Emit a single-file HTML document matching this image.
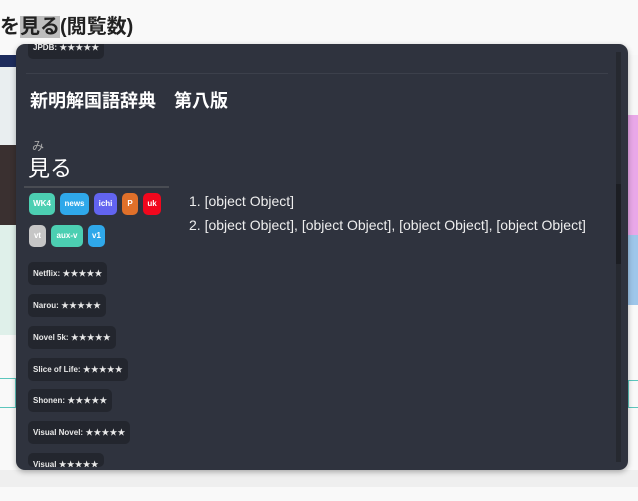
<!DOCTYPE html>
<html><head><meta charset="utf-8"><style>
*{margin:0;padding:0;box-sizing:border-box}
body{width:638px;height:501px;overflow:hidden;background:#f9f9f9;font-family:"Liberation Sans","Noto Sans CJK JP",sans-serif;position:relative}
.title{position:absolute;left:0;top:14px;font-size:20px;font-weight:bold;color:#222;line-height:26px}
.title span{background:#bdbdbd}
.imgl{position:absolute;left:0;top:55px;width:16px;height:280px;background:linear-gradient(#1d2c5c 0 12px,#e9eef0 12px 90px,#3a3030 90px 170px,#dff0ea 170px)}
.imgr{position:absolute;left:628px;top:55px;width:10px;height:250px;background:linear-gradient(#f7f7f7 0 60px,#e9a7e8 60px 180px,#9ec6ea 180px)}
.boxl{position:absolute;left:0;top:378px;width:16px;height:30px;border:1px solid #5cc6bd;border-left:none}
.boxr{position:absolute;left:628px;top:380px;width:10px;height:28px;border:1px solid #5cc6bd;border-right:none}
.band{position:absolute;left:0;top:470px;width:638px;height:17px;background:#efefef}
.pop{position:absolute;left:16px;top:44px;width:612px;height:426px;background:#2f333e;border-radius:9px;overflow:hidden;box-shadow:0 2px 6px rgba(0,0,0,.3);color:#fff}
.sb{position:absolute;left:600px;top:8px;width:5px;height:410px;background:#262930}
.th{position:absolute;left:600px;top:140px;width:5px;height:80px;background:#1c1e23}
.hr{position:absolute;left:10px;top:29px;width:582px;height:1px;background:#3c404b}
.tag{position:absolute;left:12px;background:#23262e;border-radius:5px;font-size:8px;font-weight:bold;color:#e8e8e8;padding:0 5px;height:23px;line-height:23px;white-space:nowrap}
.dict{position:absolute;left:14px;top:43px;font-size:18px;font-weight:bold}
.rd{position:absolute;left:16px;top:93px;font-size:12px;color:#aaa}
.kj{position:absolute;left:12px;top:107px;font-size:22px;color:#fff}
.line{position:absolute;left:8px;top:142px;width:145px;height:2px;background:#494c53}
.b{position:absolute;height:22px;line-height:22px;border-radius:5px;font-size:8px;font-weight:bold;color:#fff;text-align:center}
ol{position:absolute;left:173px;top:145px;font-size:14px;color:#eee;list-style:none;line-height:24px}
</style></head><body>
<div class="title">を<span>見る</span>(閲覧数)</div>
<div class="imgl"></div><div class="imgr"></div><div class="boxl"></div><div class="boxr"></div>
<div class="band"></div>
<div class="pop">
<div class="tag" style="top:-8px">JPDB: ★★★★★</div>
<div class="hr"></div>
<div class="dict">新明解国語辞典　第八版</div>
<div class="rd">み</div>
<div class="kj">見る</div>
<div class="line"></div>
<div class="b" style="left:13px;top:149px;width:26px;background:#4ccfb2">WK4</div>
<div class="b" style="left:44px;top:149px;width:29px;background:#2fa8ea">news</div>
<div class="b" style="left:78px;top:149px;width:23px;background:#6264f0">ichi</div>
<div class="b" style="left:106px;top:149px;width:16px;background:#e0702a">P</div>
<div class="b" style="left:127px;top:149px;width:18px;background:#f2071d">uk</div>
<div class="b" style="left:13px;top:181px;width:17px;background:#c6c6c6">vt</div>
<div class="b" style="left:35px;top:181px;width:32px;background:#4ccfb2">aux-v</div>
<div class="b" style="left:72px;top:181px;width:17px;background:#2fa8ea">v1</div>
<div class="tag" style="top:218px">Netflix: ★★★★★</div>
<div class="tag" style="top:250px">Narou: ★★★★★</div>
<div class="tag" style="top:282px">Novel 5k: ★★★★★</div>
<div class="tag" style="top:314px">Slice of Life: ★★★★★</div>
<div class="tag" style="top:345px">Shonen: ★★★★★</div>
<div class="tag" style="top:377px">Visual Novel: ★★★★★</div>
<div class="tag" style="top:409px;height:14px;overflow:hidden">Visual ★★★★★</div>
<ol><li>1. [object Object]</li><li>2. [object Object], [object Object], [object Object], [object Object]</li></ol>
<div class="sb"></div><div class="th"></div>
</div>
</body></html>
